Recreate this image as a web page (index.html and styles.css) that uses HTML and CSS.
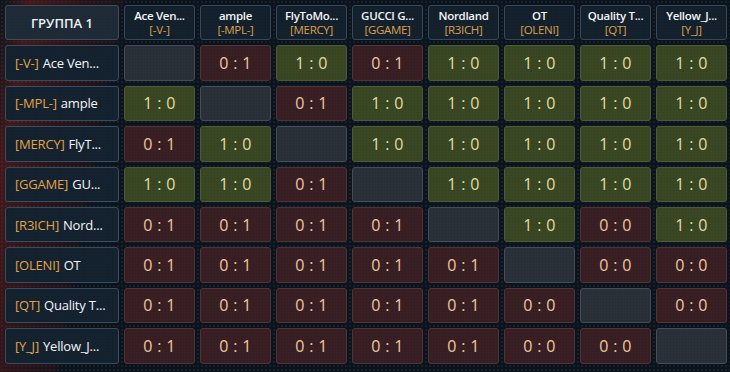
FILE: index.html
```html
<!DOCTYPE html>
<html lang="ru">
<head>
<meta charset="utf-8">
<title>Группа 1</title>
<link rel="stylesheet" href="styles.css">
</head>
<body>
<div class="board">
  <div class="table">
    <div class="cell group">ГРУППА 1</div>
    <div class="cell head"><span class="name">Ace Ven...</span><span class="tag">[-V-]</span></div>
    <div class="cell head"><span class="name">ample</span><span class="tag">[-MPL-]</span></div>
    <div class="cell head"><span class="name">FlyToMo...</span><span class="tag">[MERCY]</span></div>
    <div class="cell head"><span class="name">GUCCI G...</span><span class="tag">[GGAME]</span></div>
    <div class="cell head"><span class="name">Nordland</span><span class="tag">[R3ICH]</span></div>
    <div class="cell head"><span class="name">OT</span><span class="tag">[OLENI]</span></div>
    <div class="cell head"><span class="name">Quality T...</span><span class="tag">[QT]</span></div>
    <div class="cell head"><span class="name">Yellow_J...</span><span class="tag">[Y_J]</span></div>

    <div class="cell team"><span class="tag">[-V-]</span><span class="tname">Ace Ven...</span></div>
    <div class="cell empty"></div>
    <div class="cell loss">0 : 1</div>
    <div class="cell win">1 : 0</div>
    <div class="cell loss">0 : 1</div>
    <div class="cell win">1 : 0</div>
    <div class="cell win">1 : 0</div>
    <div class="cell win">1 : 0</div>
    <div class="cell win">1 : 0</div>

    <div class="cell team"><span class="tag">[-MPL-]</span><span class="tname">ample</span></div>
    <div class="cell win">1 : 0</div>
    <div class="cell empty"></div>
    <div class="cell loss">0 : 1</div>
    <div class="cell win">1 : 0</div>
    <div class="cell win">1 : 0</div>
    <div class="cell win">1 : 0</div>
    <div class="cell win">1 : 0</div>
    <div class="cell win">1 : 0</div>

    <div class="cell team"><span class="tag">[MERCY]</span><span class="tname">FlyT...</span></div>
    <div class="cell loss">0 : 1</div>
    <div class="cell win">1 : 0</div>
    <div class="cell empty"></div>
    <div class="cell win">1 : 0</div>
    <div class="cell win">1 : 0</div>
    <div class="cell win">1 : 0</div>
    <div class="cell win">1 : 0</div>
    <div class="cell win">1 : 0</div>

    <div class="cell team"><span class="tag">[GGAME]</span><span class="tname">GU...</span></div>
    <div class="cell win">1 : 0</div>
    <div class="cell win">1 : 0</div>
    <div class="cell loss">0 : 1</div>
    <div class="cell empty"></div>
    <div class="cell win">1 : 0</div>
    <div class="cell win">1 : 0</div>
    <div class="cell win">1 : 0</div>
    <div class="cell win">1 : 0</div>

    <div class="cell team"><span class="tag">[R3ICH]</span><span class="tname">Nord...</span></div>
    <div class="cell loss">0 : 1</div>
    <div class="cell loss">0 : 1</div>
    <div class="cell loss">0 : 1</div>
    <div class="cell loss">0 : 1</div>
    <div class="cell empty"></div>
    <div class="cell win">1 : 0</div>
    <div class="cell loss">0 : 0</div>
    <div class="cell win">1 : 0</div>

    <div class="cell team"><span class="tag">[OLENI]</span><span class="tname">OT</span></div>
    <div class="cell loss">0 : 1</div>
    <div class="cell loss">0 : 1</div>
    <div class="cell loss">0 : 1</div>
    <div class="cell loss">0 : 1</div>
    <div class="cell loss">0 : 1</div>
    <div class="cell empty"></div>
    <div class="cell loss">0 : 0</div>
    <div class="cell loss">0 : 0</div>

    <div class="cell team"><span class="tag">[QT]</span><span class="tname">Quality T...</span></div>
    <div class="cell loss">0 : 1</div>
    <div class="cell loss">0 : 1</div>
    <div class="cell loss">0 : 1</div>
    <div class="cell loss">0 : 1</div>
    <div class="cell loss">0 : 1</div>
    <div class="cell loss">0 : 0</div>
    <div class="cell empty"></div>
    <div class="cell loss">0 : 0</div>

    <div class="cell team"><span class="tag">[Y_J]</span><span class="tname">Yellow_J...</span></div>
    <div class="cell loss">0 : 1</div>
    <div class="cell loss">0 : 1</div>
    <div class="cell loss">0 : 1</div>
    <div class="cell loss">0 : 1</div>
    <div class="cell loss">0 : 1</div>
    <div class="cell loss">0 : 0</div>
    <div class="cell loss">0 : 0</div>
    <div class="cell empty"></div>
  </div>
</div>
</body>
</html>
```
FILE: styles.css
```css
html, body {
  margin: 0;
  padding: 0;
}

body {
  width: 730px;
  height: 372px;
  overflow: hidden;
  font-family: "Open Sans", "Noto Sans", sans-serif;
  background-color: #0b141c;
  background-image:
    linear-gradient(100deg, rgba(150, 30, 25, 0.0) 0px, rgba(150, 30, 25, 0.4) 30px, rgba(110, 20, 20, 0.3) 80px, rgba(90, 15, 15, 0.2) 118px, rgba(0, 0, 0, 0) 124px),
    radial-gradient(circle, #16212b 0.9px, transparent 1.3px);
  background-size: 730px 372px, 4px 4px;
  background-repeat: no-repeat, repeat;
}

.board {
  padding: 5px 3px 5px 5px;
}

.table {
  display: grid;
  grid-template-columns: 114px repeat(8, 71px);
  grid-template-rows: repeat(9, 35.4px);
  gap: 5px;
}

.cell {
  box-sizing: border-box;
  border: 1px solid #3a4a58;
  border-radius: 3px;
  display: flex;
  align-items: center;
  justify-content: center;
  background-image: radial-gradient(circle, rgba(0, 0, 0, 0.09) 0.8px, transparent 1.2px);
  background-size: 3px 3px;
}

.group {
  background-color: #1f2c38;
  border-color: #3d4d5b;
  color: #eef2f5;
  font-size: 13px;
  font-weight: 600;
}

.head {
  flex-direction: column;
  background-color: #14222e;
  border-color: #35495a;
  padding-top: 1px;
}

.head .name,
.head .tag {
  display: block;
  font-size: 11.5px;
  line-height: 14px;
  letter-spacing: -0.3px;
  white-space: nowrap;
}

.head .name {
  color: #f2f4f6;
  font-weight: 600;
}

.head .tag {
  color: #dca04a;
}

.team {
  justify-content: flex-start;
  gap: 4px;
  padding-left: 9px;
  background-color: #152330;
  border-color: #3a4c5c;
  color: #f4f6f8;
  font-size: 13px;
  white-space: nowrap;
  letter-spacing: -0.2px;
}

.team .tag {
  color: #e2a445;
}

.win,
.loss {
  font-size: 16px;
  white-space: pre;
  letter-spacing: 0.3px;
}

.win {
  background-color: #3b4824;
  border-color: #4d5a38;
  color: #e3dc9c;
}

.loss {
  background-color: #3a1f24;
  border-color: #503239;
  color: #efc79c;
}

.empty {
  background-color: #2a3139;
  border-color: #434d57;
}
```
